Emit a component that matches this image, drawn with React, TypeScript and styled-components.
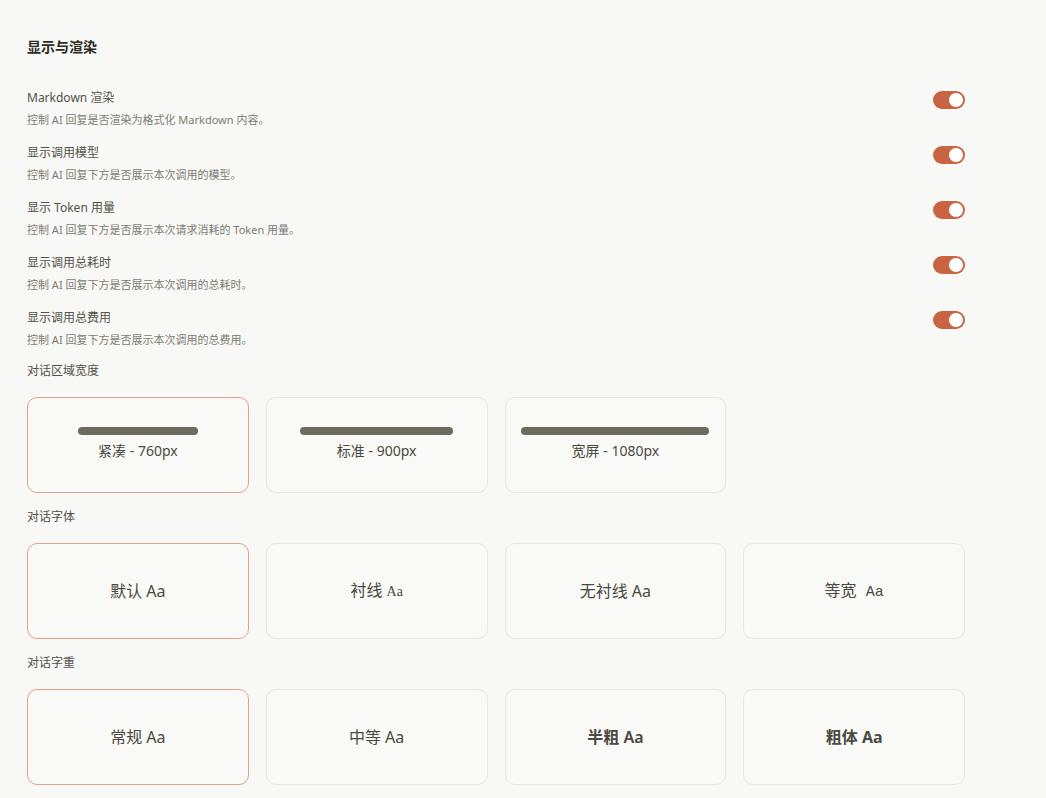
import React, { useState } from 'react';
import styled, { createGlobalStyle } from 'styled-components';

const GlobalStyle = createGlobalStyle`
  html, body {
    margin: 0;
    padding: 0;
    background: #f8f8f6;
  }
  body {
    font-family: 'Noto Sans', 'Noto Sans CJK SC', sans-serif;
    color: #3b3a33;
  }
`;

const Page = styled.div`
  padding: 37px 27px 20px;
`;

const Panel = styled.div`
  width: 938px;
`;

const Title = styled.h2`
  margin: 0 0 24px;
  font-size: 14px;
  line-height: 20px;
  font-weight: 700;
  color: #2b2a23;
`;

const SettingRow = styled.div`
  display: flex;
  justify-content: space-between;
  align-items: flex-start;
  padding: 8px 0;
`;

const RowText = styled.div`
  display: flex;
  flex-direction: column;
`;

const RowLabel = styled.div`
  font-size: 12px;
  line-height: 18px;
  color: #52514a;
`;

const RowDesc = styled.div`
  margin-top: 4px;
  font-size: 11px;
  line-height: 17px;
  color: #7d7c74;
`;

const Switch = styled.button<{ $on: boolean }>`
  position: relative;
  width: 32px;
  height: 18px;
  margin-top: 2px;
  padding: 0;
  border: none;
  border-radius: 9px;
  background: ${(p) => (p.$on ? '#c96442' : '#d6d4ce')};
  cursor: pointer;

  &::after {
    content: '';
    position: absolute;
    top: 1px;
    left: ${(p) => (p.$on ? '15px' : '1px')};
    width: 16px;
    height: 16px;
    box-sizing: border-box;
    border-radius: 50%;
    background: #fff;
    border: 1px solid ${(p) => (p.$on ? '#c96442' : '#d6d4ce')};
  }
`;

const Section = styled.div`
  margin-top: 6px;

  & + & {
    margin-top: 15px;
  }
`;

const SectionLabel = styled.div`
  font-size: 12px;
  line-height: 18px;
  color: #52514a;
  margin-bottom: 17px;
`;

const OptionGrid = styled.div`
  display: grid;
  grid-template-columns: repeat(4, 1fr);
  gap: 17px;
`;

const OptionCard = styled.button<{ $active: boolean }>`
  height: 96px;
  box-sizing: border-box;
  display: flex;
  flex-direction: column;
  align-items: center;
  justify-content: center;
  gap: 6px;
  padding: 0;
  border-radius: 10px;
  border: 1px solid ${(p) => (p.$active ? '#e3a189' : '#e8e6e2')};
  background: #f9f9f7;
  color: #4a493f;
  cursor: pointer;
  font-family: 'Noto Sans', 'Noto Sans CJK SC', sans-serif;
`;

const WidthBar = styled.div<{ $w: number }>`
  width: ${(p) => p.$w}px;
  height: 8px;
  border-radius: 4px;
  background: #6d6b5d;
  margin-top: -2px;
`;

const WidthText = styled.span`
  font-size: 14px;
  line-height: 20px;
`;

const Sample = styled.span<{ $weight?: number }>`
  font-size: 16px;
  line-height: 22px;
  font-weight: ${(p) => p.$weight ?? 400};
`;

const SerifAa = styled.span`
  font-family: 'Liberation Serif', 'Noto Sans CJK SC', serif;
  font-size: 14px;
`;

const MonoAa = styled.span`
  margin-left: 5px;
  font-family: 'Liberation Mono', 'Noto Sans CJK SC', monospace;
  font-size: 15px;
`;

const toggles = [
  { label: 'Markdown 渲染', desc: '控制 AI 回复是否渲染为格式化 Markdown 内容。' },
  { label: '显示调用模型', desc: '控制 AI 回复下方是否展示本次调用的模型。' },
  { label: '显示 Token 用量', desc: '控制 AI 回复下方是否展示本次请求消耗的 Token 用量。' },
  { label: '显示调用总耗时', desc: '控制 AI 回复下方是否展示本次调用的总耗时。' },
  { label: '显示调用总费用', desc: '控制 AI 回复下方是否展示本次调用的总费用。' },
];

const widths = [
  { name: '紧凑 - 760px', bar: 120 },
  { name: '标准 - 900px', bar: 153 },
  { name: '宽屏 - 1080px', bar: 188 },
];

// medium renders like regular in the chat font, so it stays at 400 here
const weights = [
  { name: '常规', w: 400 },
  { name: '中等', w: 400 },
  { name: '半粗', w: 600 },
  { name: '粗体', w: 700 },
];

export default function App() {
  const [on, setOn] = useState(toggles.map(() => true));
  const [width, setWidth] = useState(0);
  const [font, setFont] = useState(0);
  const [weight, setWeight] = useState(0);

  return (
    <Page>
      <GlobalStyle />
      <Panel>
        <Title>显示与渲染</Title>

        {toggles.map((t, i) => (
          <SettingRow key={t.label}>
            <RowText>
              <RowLabel>{t.label}</RowLabel>
              <RowDesc>{t.desc}</RowDesc>
            </RowText>
            <Switch
              $on={on[i]}
              onClick={() => setOn(on.map((v, j) => (j === i ? !v : v)))}
            />
          </SettingRow>
        ))}

        <Section>
          <SectionLabel>对话区域宽度</SectionLabel>
          <OptionGrid>
            {widths.map((w, i) => (
              <OptionCard key={w.name} $active={width === i} onClick={() => setWidth(i)}>
                <WidthBar $w={w.bar} />
                <WidthText>{w.name}</WidthText>
              </OptionCard>
            ))}
          </OptionGrid>
        </Section>

        <Section>
          <SectionLabel>对话字体</SectionLabel>
          <OptionGrid>
            <OptionCard $active={font === 0} onClick={() => setFont(0)}>
              <Sample>默认 Aa</Sample>
            </OptionCard>
            <OptionCard $active={font === 1} onClick={() => setFont(1)}>
              <Sample>
                衬线 <SerifAa>Aa</SerifAa>
              </Sample>
            </OptionCard>
            <OptionCard $active={font === 2} onClick={() => setFont(2)}>
              <Sample>无衬线 Aa</Sample>
            </OptionCard>
            <OptionCard $active={font === 3} onClick={() => setFont(3)}>
              <Sample>
                等宽 <MonoAa>Aa</MonoAa>
              </Sample>
            </OptionCard>
          </OptionGrid>
        </Section>

        <Section>
          <SectionLabel>对话字重</SectionLabel>
          <OptionGrid>
            {weights.map((w, i) => (
              <OptionCard key={w.name} $active={weight === i} onClick={() => setWeight(i)}>
                <Sample $weight={w.w}>{w.name} Aa</Sample>
              </OptionCard>
            ))}
          </OptionGrid>
        </Section>
      </Panel>
    </Page>
  );
}
